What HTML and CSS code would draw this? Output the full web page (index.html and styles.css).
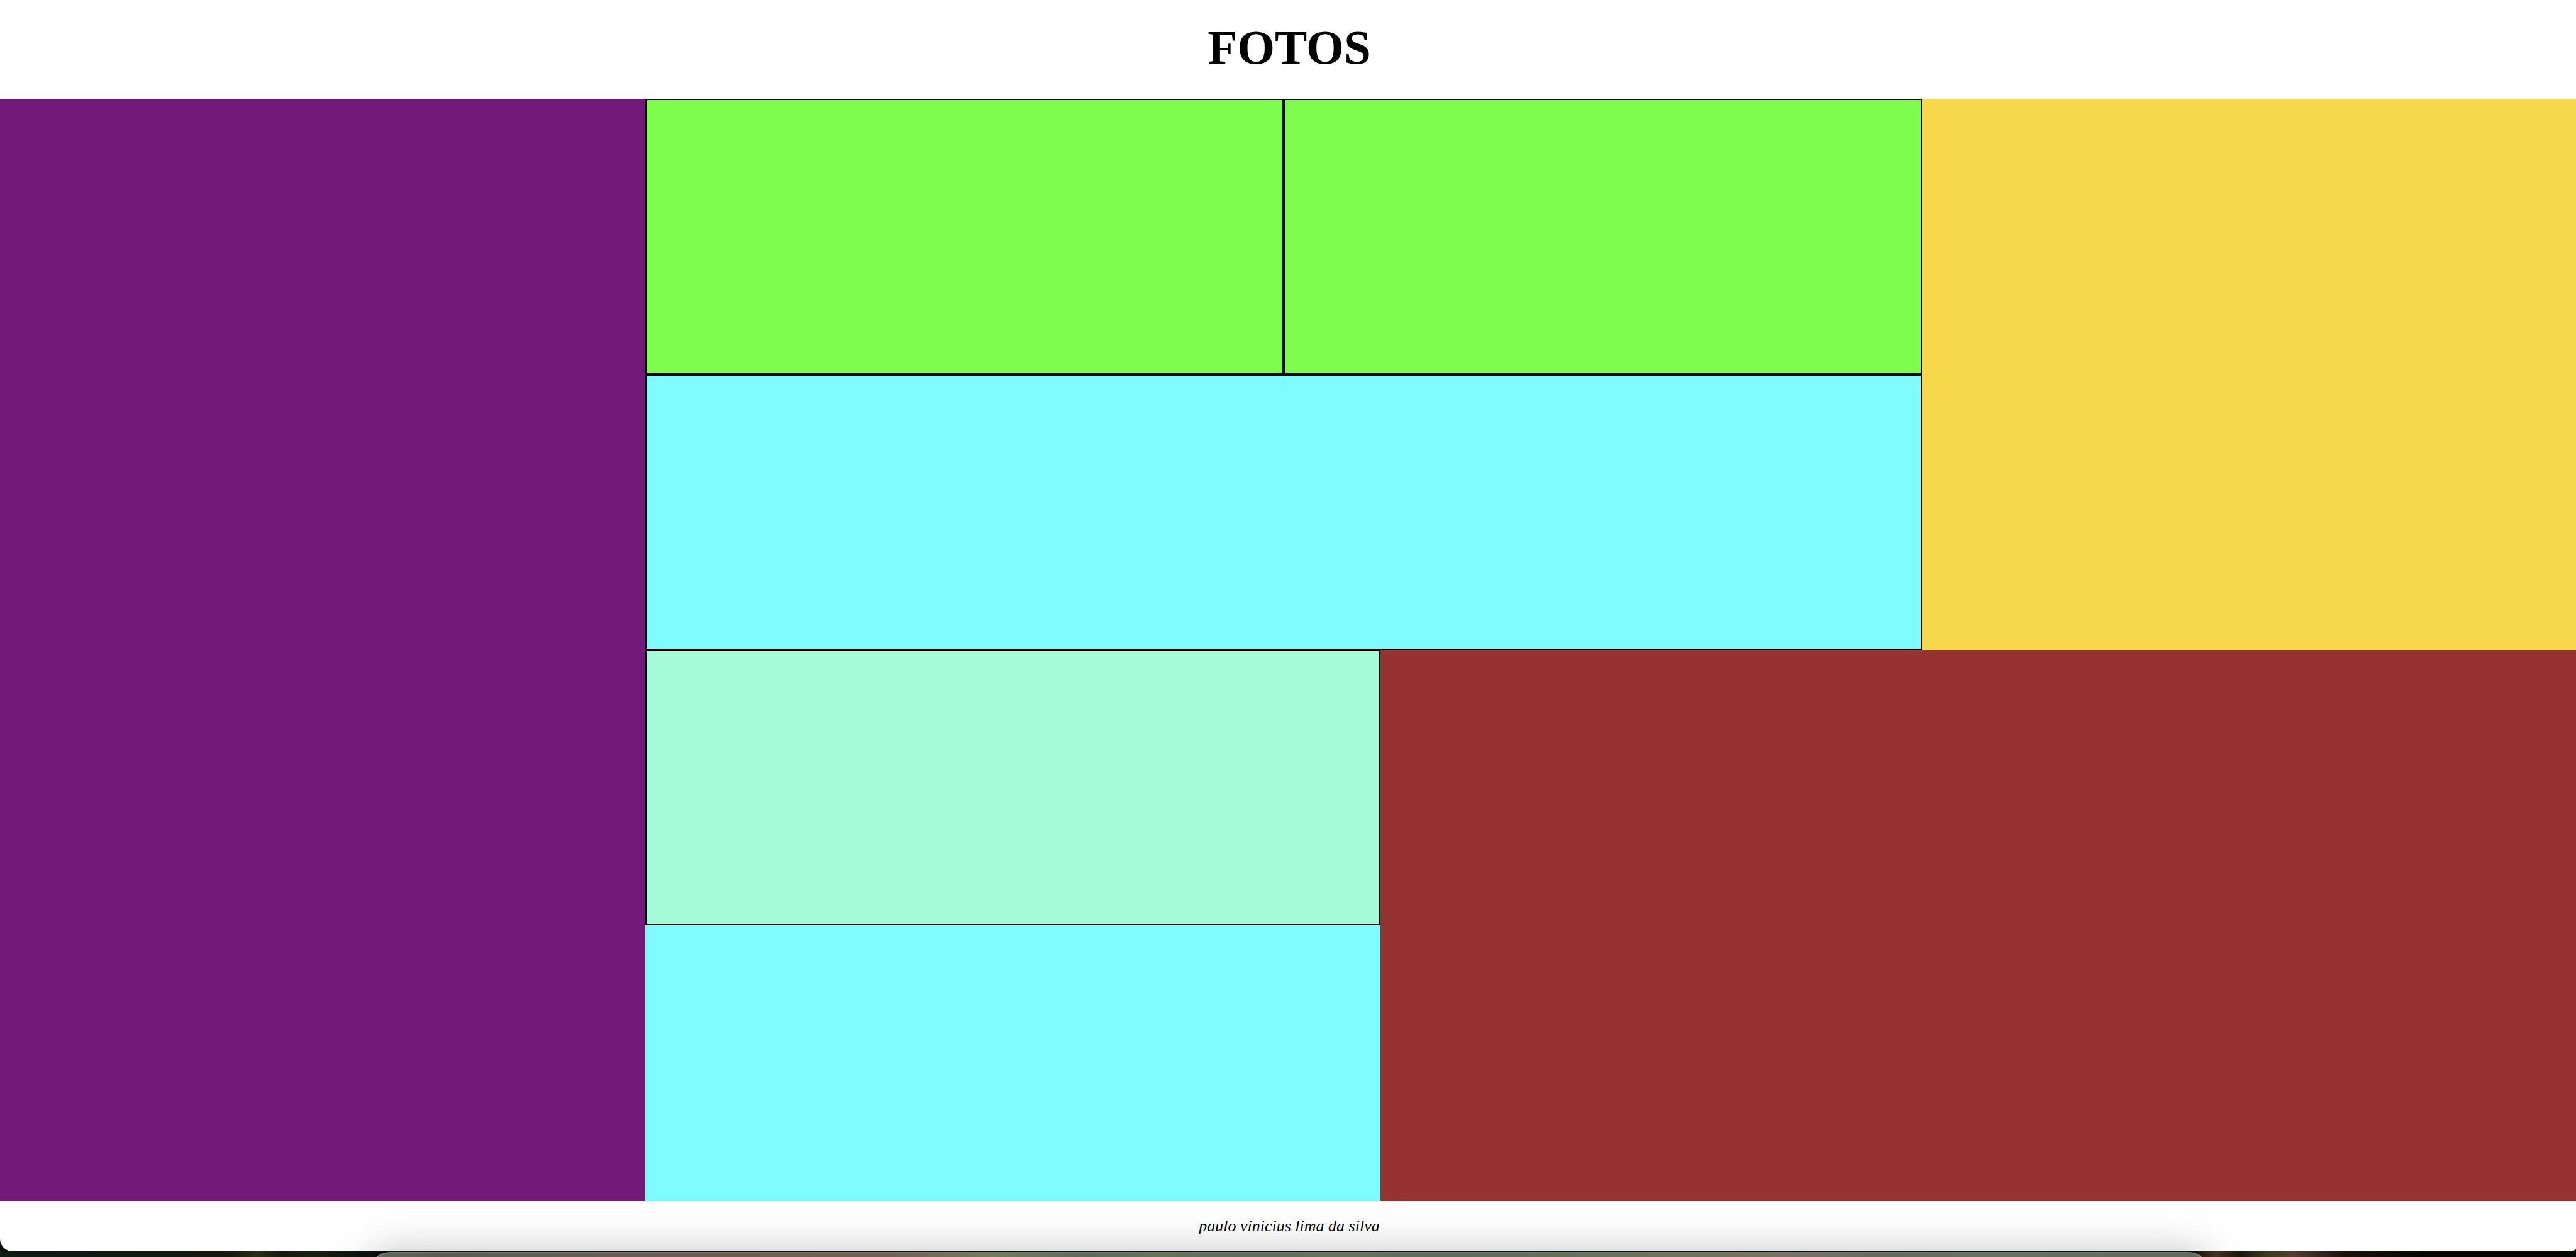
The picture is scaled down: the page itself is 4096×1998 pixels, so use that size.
FILE: index.html
```html
<!DOCTYPE html>
<html lang="pt-BR">
<head>
  <meta charset="utf-8">
  <title>FOTOS</title>
  <link rel="stylesheet" href="styles.css">
</head>
<body>
  <div class="desktop">
    <header class="header">
      <h1 class="title">FOTOS</h1>
    </header>
    <main class="gallery">
      <section class="panel purple"></section>
      <section class="pair">
        <div class="panel green framed"></div>
        <div class="panel green framed"></div>
      </section>
      <section class="panel banner framed"></section>
      <section class="panel yellow"></section>
      <section class="panel mint framed"></section>
      <section class="panel cyan"></section>
      <section class="panel brown"></section>
    </main>
    <footer class="footer">
      <p class="author">paulo vinicius lima da silva</p>
    </footer>
    <div class="wallpaper">
      <div class="dock"></div>
    </div>
  </div>
</body>
</html>
```

FILE: styles.css
```css
* {
  box-sizing: border-box;
}

body {
  margin: 0;
  font-family: "Liberation Serif", "Times New Roman", serif;
  color: #000;
}

.desktop {
  display: flex;
  flex-direction: column;
  min-height: 100vh;
  overflow: hidden;
  background: #090f0b;
}

.header {
  padding: 31px 0 38px 4px;
  background: #fff;
  text-align: center;
}

.title {
  margin: 0;
  font-size: 77px;
  line-height: 88px;
}

/* Photo grid */
.gallery {
  flex: 1;
  display: grid;
  grid-template-columns: 1026fr 1169fr 861fr 1040fr;
  grid-template-rows: repeat(4, 1fr);
}

.framed {
  border: 2px solid #000;
}

.purple {
  grid-area: 1 / 1 / 5 / 2;
  background: #72197a;
}

.pair {
  grid-area: 1 / 2 / 2 / 4;
  display: grid;
  grid-template-columns: 1fr 1fr;
}

.green {
  background: #7efc4d;
}

.banner {
  grid-area: 2 / 2 / 3 / 4;
  background: #7efcff;
}

.yellow {
  grid-area: 1 / 4 / 3 / 5;
  background: #f7d84a;
}

.mint {
  grid-area: 3 / 2 / 4 / 3;
  background: #a5fbd7;
}

.cyan {
  grid-area: 4 / 2 / 5 / 3;
  background: #7efcff;
}

.brown {
  grid-area: 3 / 3 / 5 / 5;
  background: #953330;
}

.footer {
  padding: 25px 0 25px 4px;
  background: #fff;
  border-radius: 0 0 12px 20px / 0 0 4px 20px;
  text-align: center;
}

.author {
  position: relative;
  z-index: 1;
  margin: 0;
  font-size: 26px;
  font-style: italic;
  line-height: 30px;
}

/* Strip of desktop below the window, with the top of the dock */
.wallpaper {
  height: 9px;
  padding: 1px 14% 0;
  background: linear-gradient(90deg, #101a12 0%, #0f1712 6%, #141a12 9%, #2a2d0e 10%, #131812 11%, #1a1f11 12%, #0f1310 14%, #080d09 16%, #080d09 85%, #4b3322 86%, #1c170c 87%, #3c3a1c 88%, #573c2c 89%, #1c110c 91%, #070605 94%, #080605 100%);
}

.dock {
  height: 160px;
  margin: 0 8px 0 12px;
  border: 2px solid #7a8074;
  border-radius: 36px;
  background: linear-gradient(90deg, #636960 0%, #5d5a56 4%, #5f5e58 8%, #6d5d52 16%, #716052 28%, #757b5c 34%, #606959 39%, #66735b 43%, #606b59 47%, #67745b 53%, #606a5a 58%, #677059 66%, #7b7264 77%, #68695f 82%, #68715f 88%, #656760 100%);
  box-shadow: 0 0 64px rgba(0, 0, 0, 0.25);
}
```
